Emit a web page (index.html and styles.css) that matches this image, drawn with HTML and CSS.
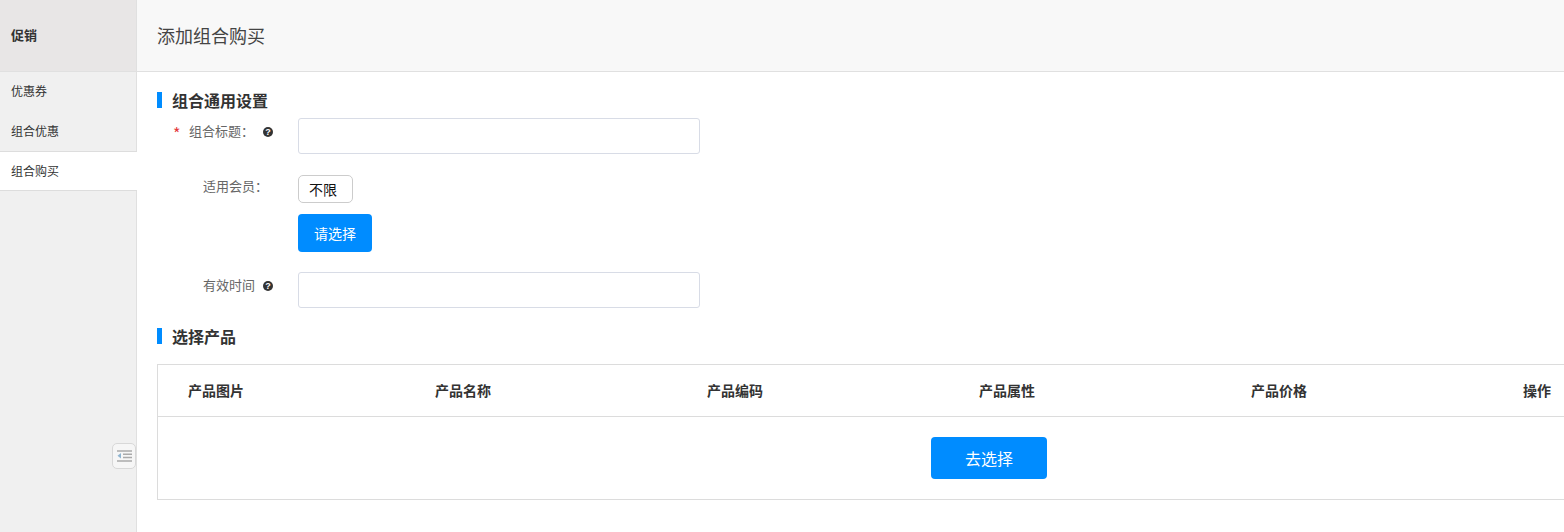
FILE: index.html
```html
<!DOCTYPE html>
<html lang="zh-CN">
<head>
<meta charset="utf-8">
<title>添加组合购买</title>
<link rel="stylesheet" href="styles.css">
</head>
<body>
<div class="app">
  <aside class="sidebar">
    <div class="side-title">促销</div>
    <nav class="side-nav">
      <a class="side-item">优惠券</a>
      <a class="side-item">组合优惠</a>
      <a class="side-item active">组合购买</a>
    </nav>
    <button class="collapse" aria-label="收起">
      <svg width="15" height="12" viewBox="0 0 15 12"><path class="c-line" d="M0 1h15M6 4.200h9M6 7.500h9M0 11h15"/><path class="c-arrow" d="M4 3v5.500L0.500 5.750z"/></svg>
    </button>
  </aside>
  <main class="main">
    <header class="page-head"><h1>添加组合购买</h1></header>
    <div class="content">
      <h2 class="sec-title sec-first">组合通用设置</h2>
      <div class="form-row row-title">
        <label class="form-label"><span class="star">*</span><span class="label-text">组合标题：</span><span class="help">?</span></label>
        <input class="text-input" type="text">
      </div>
      <div class="form-row row-member">
        <label class="form-label"><span class="label-text no-help">适用会员：</span></label>
        <div class="field-col">
          <span class="tag">不限</span>
          <button class="btn btn-small">请选择</button>
        </div>
      </div>
      <div class="form-row row-time">
        <label class="form-label"><span class="label-text">有效时间</span><span class="help">?</span></label>
        <input class="text-input" type="text">
      </div>
      <h2 class="sec-title sec-second">选择产品</h2>
      <div class="table">
        <div class="thead">
          <span class="th col1">产品图片</span>
          <span class="th col2">产品名称</span>
          <span class="th col2">产品编码</span>
          <span class="th col2">产品属性</span>
          <span class="th col2">产品价格</span>
          <span class="th col2">操作</span>
        </div>
        <div class="tbody"><button class="btn btn-large">去选择</button></div>
      </div>
    </div>
  </main>
</div>
</body>
</html>
```
FILE: styles.css
```css
* { box-sizing: border-box; }
html, body { margin: 0; height: 100%; overflow: hidden; background: #fff; }
body { font-family: "Noto Sans CJK SC", "Liberation Sans", sans-serif; color: #333; }
.app { display: flex; height: 532px; width: 1564px; }
.sidebar { position: relative; flex: 0 0 137px; width: 137px; background: #f0f0f0; border-right: 1px solid #e0e0e0; }
.side-title { height: 72px; padding: 0 0 2px 11px; display: flex; align-items: center; background: #e8e6e6; border-bottom: 1px solid #e0e0e0; font-size: 13px; font-weight: 700; color: #333; }
.side-item { display: flex; align-items: center; height: 40px; padding: 0 0 3px 11px; font-size: 12px; color: #333; }
.side-item.active { width: 137px; height: 40px; margin-top: -1px; padding-bottom: 1px; background: #fff; border-top: 1px solid #ddd; border-bottom: 1px solid #ddd; position: relative; }
.collapse { position: absolute; left: 112px; top: 443px; width: 24px; height: 26px; padding: 0; display: flex; align-items: center; justify-content: center; background: #f6f6f6; border: 1px solid #d8d8d8; border-radius: 5px; }
.c-line { stroke: #aaa; stroke-width: 1.600; fill: none; }
.c-arrow { fill: #8fb4d0; }
.main { flex: 1; min-width: 0; }
.page-head { height: 72px; padding: 0 0 2px 20px; display: flex; align-items: center; background: #f8f8f8; border-bottom: 1px solid #e0e0e0; }
.page-head h1 { margin: 0; font-size: 18px; font-weight: 400; color: #444; }
.content { padding: 0 0 0 20px; overflow: hidden; height: 460px; }
.sec-title { margin: 0; height: 16px; padding-left: 10px; border-left: 5px solid #008cff; font-size: 16px; line-height: 16px; font-weight: 700; color: #333; }
.sec-first { margin-top: 20px; }
.sec-second { margin-top: 20px; }
.form-row { display: flex; align-items: flex-start; }
.row-title { margin-top: 10px; }
.row-member { margin-top: 21px; }
.row-time { margin-top: 20px; }
.form-label { width: 141px; flex: none; display: flex; align-items: center; justify-content: flex-end; padding-right: 25px; font-size: 13px; color: #666; position: relative; }
.row-title .form-label { height: 28px; }
.row-member .form-label { height: 26px; margin-top: -3px; }
.row-time .form-label { height: 28px; }
.label-text { white-space: nowrap; margin-top: -3px; }
.no-help { margin-right: 5px; margin-top: 0; }
.row-title .label-text { margin-right: 9px; }
.row-time .label-text { margin-right: 8px; }
.star { position: absolute; left: 16px; top: 3px; color: #e4393c; font-size: 16px; }
.help { width: 10px; height: 10px; flex: none; border-radius: 50%; background: #333; color: #fff; font: 700 9px/10px "Liberation Sans", sans-serif; text-align: center; }
.text-input { width: 402px; height: 36px; border: 1px solid #d8dce6; border-radius: 3px; background: #fff; padding: 0 10px; outline: none; }
.field-col { display: flex; flex-direction: column; align-items: flex-start; }
.tag { width: 55px; height: 28px; display: flex; align-items: center; padding-left: 10px; border: 1px solid #ccc; border-radius: 5px; font-size: 14px; color: #111; }
.btn { border: none; background: #008cff; color: #fff; font-family: inherit; border-radius: 4px; padding: 0; }
.btn-small { width: 74px; height: 38px; margin-top: 11px; font-size: 14px; }
.btn-large { width: 116px; height: 42px; font-size: 16px; }
.table { margin-top: 20px; width: 1500px; border: 1px solid #dcdcdc; }
.thead { display: flex; height: 52px; align-items: center; padding: 0 0 2px 30px; border-bottom: 1px solid #dcdcdc; }
.th { flex: none; font-size: 14px; font-weight: 700; line-height: 20px; color: #333; white-space: nowrap; }
.th.col1 { width: 247px; }
.th.col2 { width: 272px; }
.tbody { height: 82px; padding: 20px 0 0 773px; }
```
